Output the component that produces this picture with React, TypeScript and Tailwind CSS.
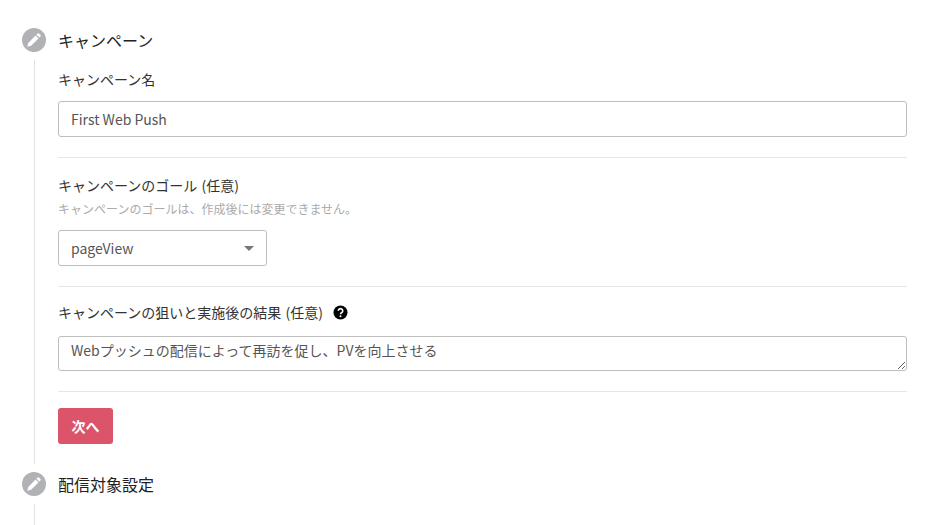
import React, { useState } from 'react';

const PencilIcon = () => (
  <div className="w-6 h-6 rounded-full bg-[#b1b2b5] flex items-center justify-center shrink-0">
    <svg viewBox="0 0 16 16" className="w-4 h-4" fill="#fff">
      <path d="M11.6 1.5a1 1 0 0 1 1.4 0l1.5 1.5a1 1 0 0 1 0 1.4l-1.2 1.2-2.9-2.9 1.2-1.2zM9.6 3.5l2.9 2.9-7.4 7.4-3.8.9.9-3.8 7.4-7.4z" />
    </svg>
  </div>
);

const StepHeader = ({ title }: { title: string }) => (
  <div className="flex items-center h-6 ml-[22px]">
    <PencilIcon />
    <h2 className="ml-3 text-base leading-6 text-[#222]">{title}</h2>
  </div>
);

const Divider = () => <hr className="border-0 border-t border-[#e6e6e6]" />;

const App: React.FC = () => {
  const [name, setName] = useState('First Web Push');
  const [goal, setGoal] = useState('pageView');
  const [memo, setMemo] = useState('Webプッシュの配信によって再訪を促し、PVを向上させる');

  return (
    <div className="w-[940px] h-[525px] overflow-hidden bg-white pt-7 font-['Noto_Sans_CJK_JP','Noto_Sans',sans-serif] text-[#333]">
      <StepHeader title="キャンペーン" />

      <div className="mt-2 ml-[34px] mr-[33px] border-l border-[#e2e2e2] pl-[23px] pt-[9px] h-[404px]">
        <label className="block text-sm leading-5">キャンペーン名</label>
        <input
          value={name}
          onChange={(e) => setName(e.target.value)}
          className="block mt-3 w-full h-[35.5px] px-3 text-sm text-[#555] border border-[#bdbdbd] rounded-[3px] outline-none"
        />
        <div className="mt-[20.5px]">
          <Divider />
        </div>

        <label className="block mt-[17px] text-sm leading-5 [word-spacing:1px]">キャンペーンのゴール (任意)</label>
        <p className="mt-[6px] text-xs leading-4 text-[#aaa]">キャンペーンのゴールは、作成後には変更できません。</p>
        <div className="relative mt-[13px] w-[209px]">
          <select
            value={goal}
            onChange={(e) => setGoal(e.target.value)}
            className="block w-full h-[35.5px] px-3 text-sm text-[#555] bg-white border border-[#bdbdbd] rounded-[3px] appearance-none outline-none"
          >
            <option value="pageView">pageView</option>
          </select>
          <div className="absolute right-[13px] top-4 w-0 h-0 border-x-[5px] border-x-transparent border-t-[5px] border-t-[#777] pointer-events-none" />
        </div>
        <div className="mt-[20.5px]">
          <Divider />
        </div>

        <div className="flex items-center mt-[15px] h-5">
          <label className="text-sm leading-5 [word-spacing:1px]">キャンペーンの狙いと実施後の結果 (任意)</label>
          <svg viewBox="0 0 16 16" className="ml-[10px] w-[15px] h-[15px]">
            <circle cx="8" cy="8" r="7.5" fill="#000" />
            <path d="M5.6 6.2a2.4 2.3 0 1 1 3.6 2c-.8.5-1.2.8-1.2 1.7" fill="none" stroke="#fff" strokeWidth="1.7" />
            <circle cx="8" cy="12" r="1.05" fill="#fff" />
          </svg>
        </div>
        <textarea
          value={memo}
          onChange={(e) => setMemo(e.target.value)}
          rows={1}
          className="block mt-[14px] w-full h-[35px] px-3 py-[3px] text-sm leading-5 text-[#555] border border-[#bdbdbd] rounded-[3px] outline-none"
        />
        <div className="mt-5">
          <Divider />
        </div>

        <button className="block mt-4 w-[55px] h-[36px] bg-[#dc5469] text-white text-sm font-bold rounded-[3px]">
          次へ
        </button>
      </div>

      <div className="mt-2">
        <StepHeader title="配信対象設定" />
      </div>
      <div className="mt-2 ml-[34px] h-8 border-l border-[#e2e2e2]" />
    </div>
  );
};

export default App;
